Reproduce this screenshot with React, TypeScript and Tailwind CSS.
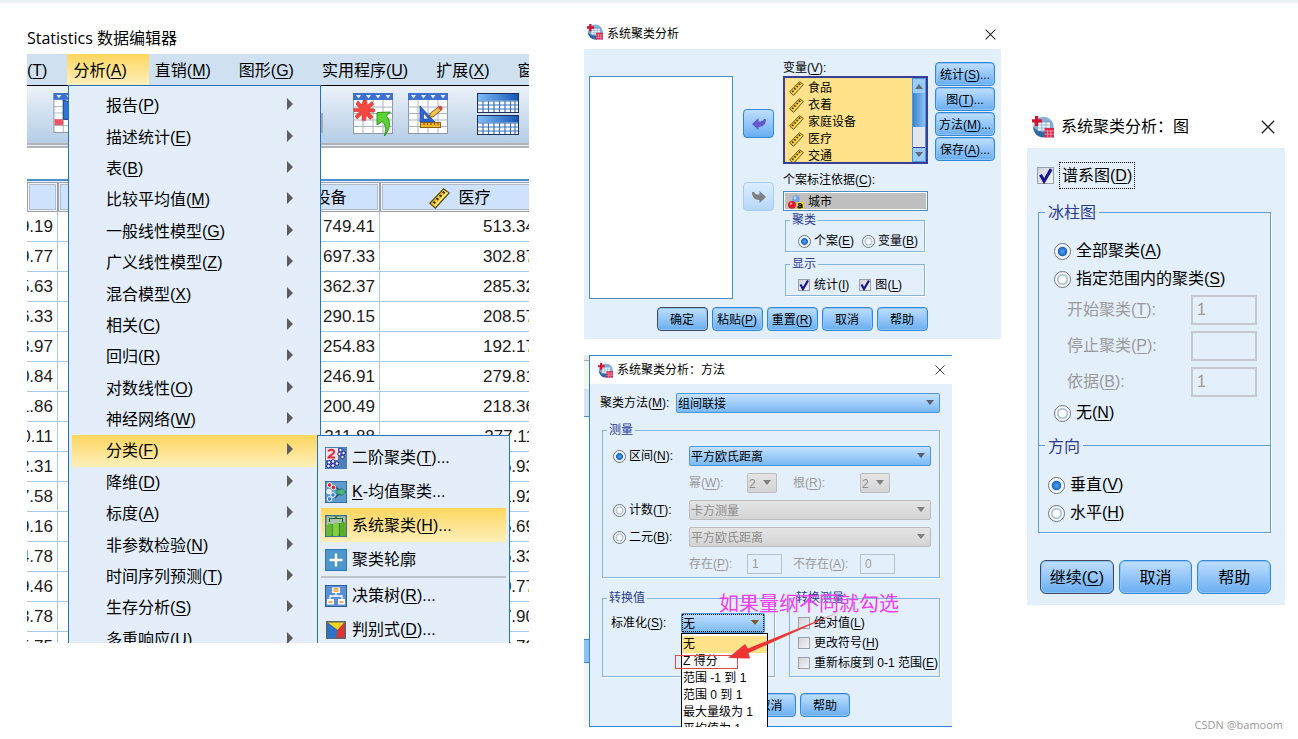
import React from "react";

type MnemonicProps = { text?: string; k: string; after?: string };

function Mnemonic({ text = "", k, after = "" }: MnemonicProps) {
  return (
    <span className="whitespace-nowrap">
      {text}(<span className="underline underline-offset-2">{k}</span>){after}
    </span>
  );
}

/* ---------- icons ---------- */

function RulerIcon({ className }: { className: string }) {
  return (
    <svg viewBox="0 0 20 20" className={className} aria-hidden="true">
      <path d="M.8 14.500 14 .8l5.200 4L6 19.200Z" fill="#efc52c" stroke="#5a4a18" strokeWidth="1.200" />
      <path d="M5.500 17 17.500 4" stroke="#fff0a0" strokeWidth="1.200" />
      <path d="m4 13 2 1.500M7 9.800l2 1.500M10 6.600l2 1.500M13 3.500l2 1.500" stroke="#3c3010" strokeWidth="1.800" />
    </svg>
  );
}

function AppIcon({ className }: { className: string }) {
  return (
    <svg viewBox="0 0 22 22" className={className} aria-hidden="true">
      <circle cx="11.500" cy="11" r="10.300" fill="#86aed6" />
      <path d="M1.200 11a10.300 10.300 0 0 0 12 10.200V16C8 16 4 14.500 1.200 11Z" fill="#2f66a3" />
      <rect x="5.500" y="6" width="13" height="9" fill="#f4f8fc" stroke="#5c89b8" strokeWidth=".7" />
      <path d="M5.500 9h13M5.500 12h13M9.800 6v9M14.100 6v9" stroke="#7fa9d2" strokeWidth=".8" />
      <rect x="12.500" y="12" width="9.500" height="9.500" fill="#cf2c4c" />
      <path d="M12.500 15h9.500M12.500 18.200h9.500M15.700 14v7.500M18.900 14v7.500" stroke="#f2b9c4" strokeWidth=".7" />
      <path d="M3 0h3.200v3.200h3.600v3.200H6.200V10H3V6.400H0V3.200h3Z" fill="#d3122f" />
    </svg>
  );
}

function NominalIcon() {
  return (
    <svg viewBox="0 0 16 14" className="h-3.5 w-4 shrink-0" aria-hidden="true">
      <circle cx="8" cy="4" r="3.8" fill="#6fa5e6" />
      <circle cx="7" cy="3" r="1.400" fill="#c7defa" />
      <circle cx="4" cy="9.800" r="3.900" fill="#d9202b" />
      <circle cx="3" cy="8.600" r="1.200" fill="#f79a9a" />
      <rect x="8.500" y="7" width="7.500" height="7" fill="#f5cf2e" />
      <path d="M10 9.300c2-1 4-.6 4 1v2.700m0-2.200c-2-.2-4 .1-4 1.200s3 1.200 4-.2" fill="none" stroke="#111" strokeWidth="1.300" />
    </svg>
  );
}

function CloseIcon({ className }: { className: string }) {
  return (
    <svg viewBox="0 0 12 12" className={className} aria-hidden="true">
      <path d="m.7.7 10.600 10.600M11.300.7.7 11.300" stroke="#222" strokeWidth="1.100" fill="none" />
    </svg>
  );
}

function SheetBase() {
  return (
    <>
      <rect x=".5" y=".5" width="39" height="40" fill="#fff" stroke="#8c98a8" />
      <path d="M.5 14h39M.5 20.500h39M.5 27h39M.5 33.500h39M10 7v33M20 7v33M30 7v33" stroke="#aab4c0" />
      <rect width="40" height="7" fill="#3e70cf" />
      <path d="M3 2h5L5.500 5.500ZM13 2h5l-2.500 3.500ZM22.500 2h5L25 5.500ZM32.500 2h5L35 5.500Z" fill="#e6f0ff" />
    </>
  );
}

function SheetMarkIcon() {
  return (
    <svg viewBox="0 0 40 41" className="h-10 w-10 shrink-0" aria-hidden="true">
      <SheetBase />
      <rect x="1" y="27" width="9" height="6" fill="#ee5468" />
      <path d="M10 7v20h18V14Z" fill="#2f74d6" stroke="#17407e" />
    </svg>
  );
}

function SheetUndoIcon() {
  return (
    <svg viewBox="0 0 40 43" className="h-[43px] w-10 shrink-0" aria-hidden="true">
      <SheetBase />
      <path d="m5 8 4 4 1.500-5 3 .3 1 5L19 8.500l1.500 3-4.500 4 5.500.5v3h-5.500l4 5-3 2.500-3.500-4.500-1 5.500-3.500-.2.200-6L4 26l-1.800-3L7 18.500H.8v-3l6 .2L3 11Z" fill="#f4483f" stroke="#c92a24" strokeWidth=".6" />
      <path d="M24 19.500 37.500 19l-4 4c4.500 5 4 13-2 20 2-8 1-12-2.500-14.500L24 32Z" fill="#5bd136" stroke="#288a14" strokeWidth=".9" />
    </svg>
  );
}

function SheetDesignIcon() {
  return (
    <svg viewBox="0 0 40 43" className="h-[43px] w-10 shrink-0" aria-hidden="true">
      <SheetBase />
      <path fillRule="evenodd" d="M12 13v16h15Zm3.500 7 5.500 6h-5.500Z" fill="#2c68d6" stroke="#1b4592" strokeWidth=".7" />
      <path d="m21 24 1.500-4L31 13.500l3 3L25 24Z" fill="#f2c14a" stroke="#5a4316" strokeWidth=".8" />
      <path d="m30 14.500 2.500-2 2.500 2.500-2.500 2.500Z" fill="#d64545" />
      <rect x="12.500" y="29.500" width="20" height="5" fill="#f1b429" stroke="#8a6212" />
      <path d="M16 30v2M19.500 30v2M23 30v2M26.500 30v2M30 30v2" stroke="#6d4b0a" />
    </svg>
  );
}

function SplitSheetIcon() {
  const half = (y: number) => (
    <g transform={`translate(0 ${y})`}>
      <rect x=".5" y=".5" width="41" height="19" fill="#fff" stroke="#1d3057" />
      <rect x="1" y="1" width="40" height="6.500" fill="url(#split-head)" />
      <path d="M1 8h40M1 12h40M1 16h40M6 8v11M11.500 8v11M17 8v11M22.500 8v11M28 8v11M33.500 8v11M38 8v11" stroke="#3a73b9" strokeWidth="1.200" />
    </g>
  );
  return (
    <svg viewBox="0 0 42 43" className="h-[43px] w-[42px] shrink-0" aria-hidden="true">
      <defs>
        <linearGradient id="split-head">
          <stop offset="0" stopColor="#7fbcf6" />
          <stop offset="1" stopColor="#1457b8" />
        </linearGradient>
      </defs>
      {half(0)}
      {half(22)}
    </svg>
  );
}

const iconBox = "h-[22px] w-[22px] shrink-0";

function TwoStepIcon() {
  return (
    <svg viewBox="0 0 22 22" className={iconBox} aria-hidden="true">
      <rect width="22" height="22" fill="#4c7fb8" />
      <rect x="1" y="1" width="12" height="12" fill="#f3dfe6" />
      <path d="M3.500 4.500C4 2 9 2 9 5S4 8 3.500 10.500H10" fill="none" stroke="#e02c3c" strokeWidth="2" />
      <g fill="#fff" stroke="#26269a" strokeWidth="1">
        <circle cx="15.500" cy="3" r="1.700" />
        <circle cx="18.500" cy="6" r="1.700" />
        <circle cx="14.500" cy="7" r="1.700" />
        <circle cx="17.500" cy="10" r="1.700" />
        <circle cx="4" cy="15.500" r="1.800" />
        <circle cx="8" cy="14.500" r="1.800" />
        <circle cx="3.500" cy="19" r="1.800" />
        <circle cx="8" cy="18.500" r="1.800" />
        <circle cx="12" cy="16.500" r="1.800" />
      </g>
    </svg>
  );
}

function KMeansIcon() {
  return (
    <svg viewBox="0 0 22 22" className={iconBox} aria-hidden="true">
      <rect width="22" height="22" fill="#5d9bcc" stroke="#2b5f96" strokeWidth="1.500" />
      <path d="M10 5l6 6-6 6" fill="none" stroke="#1f4f7f" strokeWidth="1.500" />
      <path d="M12 9h4V7l5 4-5 4v-2h-4Z" fill="#4cb878" stroke="#1c6a3c" strokeWidth=".6" />
      <g stroke="#fff" strokeWidth="1">
        <circle cx="4.500" cy="4" r="2.300" fill="#e4222e" />
        <circle cx="8.500" cy="6.500" r="2.300" fill="#e4222e" />
        <circle cx="4" cy="10.500" r="2.300" fill="#e9eef5" />
        <circle cx="8" cy="14" r="2.300" fill="#2e7fe0" />
        <circle cx="4.500" cy="18" r="2.300" fill="#2e7fe0" />
      </g>
    </svg>
  );
}

function HierarchyIcon() {
  return (
    <svg viewBox="0 0 22 22" className={iconBox} aria-hidden="true">
      <rect x=".7" y=".7" width="20.600" height="20.600" fill="#a9c4ae" stroke="#3f6f8f" strokeWidth="1.400" />
      <path d="M4.500 7V3.500h13V7M11 1v2.500" fill="none" stroke="#2e5a1e" strokeWidth="1.200" />
      <path d="M1.500 11 4.500 8l2 1.500v11.500h-5Z" fill="#63bb28" />
      <path d="m8 9.500 3.500-2.500 2 1.500V21H8Z" fill="#7fd336" />
      <path d="m15 8.500 3-2 2.500 1.500v13H15Z" fill="#57b022" />
      <path d="M7.200 9v12M14.300 8v13" stroke="#2e6a1e" strokeWidth="1" />
    </svg>
  );
}

function PlusIcon() {
  return (
    <svg viewBox="0 0 22 22" className={iconBox} aria-hidden="true">
      <rect x=".5" y=".5" width="21" height="21" fill="#4d97cf" stroke="#2f74b3" />
      <path d="M11 4.500v13M4.500 11h13" stroke="#fff" strokeWidth="2.400" />
    </svg>
  );
}

function TreeIcon() {
  return (
    <svg viewBox="0 0 22 22" className={iconBox} aria-hidden="true">
      <rect x=".5" y=".5" width="21" height="21" fill="#5b90d2" stroke="#2b5c9c" />
      <path d="M11 7v4M5 15v-4h12v4" fill="none" stroke="#fff" strokeWidth="1.300" />
      <rect x="7" y="2.500" width="8" height="5.500" fill="#fff" />
      <rect x="2" y="14" width="7" height="5.500" fill="#fff" />
      <rect x="13" y="14" width="7" height="5.500" fill="#fff" />
      <path d="M8.500 4h5M8.500 6h5M3.500 17h4M14.500 17h4" stroke="#ee9a1e" strokeWidth="1.400" />
    </svg>
  );
}

function DiscriminantIcon() {
  return (
    <svg viewBox="0 0 22 22" className={iconBox} aria-hidden="true">
      <rect x="1" y="2" width="20" height="18" fill="#5b6470" />
      <path d="M2.500 3.500h17L12.500 11Z" fill="#f7d21c" />
      <path d="M2.500 3.500 12.500 11l-1 8h-9Z" fill="#2c72c8" />
      <path d="M19.500 3.500v15h-8l1-7.500Z" fill="#e0342c" />
    </svg>
  );
}

/* ---------- shared controls ---------- */

type PushProps = { children: React.ReactNode; size?: "sm" | "lg"; primary?: boolean; className?: string };

function Push({ children, size = "sm", primary = false, className = "" }: PushProps) {
  const scale = size === "sm" ? "h-6 text-xs rounded pt-0.5" : "h-[34px] text-base rounded-md pt-0.5";
  const edge = primary ? "border-[#3b4a60]" : "border-[#3388d8]";
  return (
    <button
      type="button"
      className={`flex items-center justify-center whitespace-nowrap border bg-linear-to-b from-[#bfdfff] to-[#68adf0] text-black shadow-[inset_0_0_0_1px_#8fc4f7] ${scale} ${edge} ${className}`}
    >
      {children}
    </button>
  );
}

type ChoiceProps = {
  name?: string;
  checked?: boolean;
  size?: "sm" | "lg";
  children: React.ReactNode;
  className?: string;
};

function Radio({ name, checked = false, size = "sm", children, className = "" }: ChoiceProps) {
  const box = size === "sm" ? "size-[13px]" : "size-[17px]";
  const gap = size === "sm" ? "gap-[3px]" : "gap-[5px]";
  const dot = checked
    ? "bg-[radial-gradient(circle_closest-side,#56a6f4_0%,#1c66c0_56%,#d5e4f0_68%,#ffffff_84%)]"
    : "bg-[radial-gradient(circle_closest-side,#ffffff_0%,#ffffff_46%,#8fb0ca_62%,#ffffff_82%)]";
  return (
    <label className={`flex items-center ${gap} ${className}`}>
      <input
        type="radio"
        name={name}
        defaultChecked={checked}
        className={`shrink-0 appearance-none rounded-full border border-[#66727e] ${box} ${dot}`}
      />
      {children}
    </label>
  );
}

function Check({ checked = false, size = "sm", children, className = "" }: ChoiceProps) {
  const box = size === "sm" ? "size-3" : "size-[17px]";
  const gap = size === "sm" ? "gap-1" : "gap-[5px]";
  return (
    <label className={`flex items-center ${gap} ${className}`}>
      <span className={`relative shrink-0 ${box}`}>
        <input
          type="checkbox"
          defaultChecked={checked}
          className="block size-full appearance-none border border-[#98a0aa] bg-linear-to-br from-[#d2d2d8] to-[#f6f6f8]"
        />
        {checked && (
          <svg viewBox="0 0 12 12" className="pointer-events-none absolute inset-0 size-full" aria-hidden="true">
            <path d="m2.500 5.500 2.500 4.500L10 1.500" fill="none" stroke="#15158c" strokeWidth="2.200" />
          </svg>
        )}
      </span>
      {children}
    </label>
  );
}

type DropProps = {
  id: string;
  value: string;
  disabled?: boolean;
  focused?: boolean;
  className?: string;
};

function Drop({ id, value, disabled = false, focused = false, className = "" }: DropProps) {
  const skin = disabled
    ? "border-[#bcbcbc] bg-linear-to-b from-[#e4e4e4] to-[#d4d4d4] text-[#8e8e8e]"
    : "border-[#4a97dc] bg-linear-to-b from-[#c4e1ff] to-[#7ab9f4] text-black";
  return (
    <div className={`relative h-5 ${className}`}>
      <select
        id={id}
        disabled={disabled}
        defaultValue={value}
        className={`block h-5 w-full appearance-none rounded-xs border pl-px pt-0.5 text-xs disabled:opacity-100 ${skin} ${
          focused ? "outline-1 -outline-offset-2 outline-dotted outline-black" : ""
        }`}
      >
        <option>{value}</option>
      </select>
      <svg viewBox="0 0 8 5" className="pointer-events-none absolute right-1.5 top-[7px] h-[5px] w-2" aria-hidden="true">
        <path d="M0 0h8L4 5Z" fill={focused ? "#7a5a1e" : disabled ? "#808080" : "#56606c"} />
      </svg>
    </div>
  );
}

const groupBox = "min-w-0 border border-[#86b4da] shadow-[1px_1px_0_#ffffff]";

/* ---------- data editor ---------- */

const rows: [string, string, string][] = [
  ["9.19", "749.41", "513.34"],
  ["9.77", "697.33", "302.87"],
  ["5.63", "362.37", "285.32"],
  ["6.33", "290.15", "208.57"],
  ["3.97", "254.83", "192.17"],
  ["0.84", "246.91", "279.81"],
  ["1.86", "200.49", "218.36"],
  ["0.11", "211.88", "277.11"],
  ["2.31", "", "346.93"],
  ["7.58", "", "211.92"],
  ["9.16", "", "435.69"],
  ["4.78", "", "126.33"],
  ["9.46", "", "160.77"],
  ["3.78", "", "107.90"],
  ["5.75", "", "219.79"],
];

const analyzeItems: [string, string][] = [
  ["报告", "P"],
  ["描述统计", "E"],
  ["表", "B"],
  ["比较平均值", "M"],
  ["一般线性模型", "G"],
  ["广义线性模型", "Z"],
  ["混合模型", "X"],
  ["相关", "C"],
  ["回归", "R"],
  ["对数线性", "O"],
  ["神经网络", "W"],
  ["分类", "F"],
  ["降维", "D"],
  ["标度", "A"],
  ["非参数检验", "N"],
  ["时间序列预测", "T"],
  ["生存分析", "S"],
  ["多重响应", "U"],
];

const menuBar: [string, string][] = [
  ["分析", "A"],
  ["直销", "M"],
  ["图形", "G"],
  ["实用程序", "U"],
  ["扩展", "X"],
];

const gold = "bg-linear-to-b from-[#ffd65a] to-[#fcefb9]";

function AnalyzeMenu() {
  return (
    <ul
      role="menu"
      className="absolute left-[41px] top-[63px] grid h-[575px] w-[253px] grid-rows-[repeat(18,minmax(0,1fr))] border border-[#2673b8] bg-[#e3eefa] px-[3px] pb-1 pt-1 text-base"
    >
      {analyzeItems.map(([text, k]) => (
        <li key={text} role="none" className="flex">
          <button
            type="button"
            role="menuitem"
            className={`flex w-full items-center justify-between pl-[34px] pr-6 pt-px ${k === "F" ? gold : ""}`}
          >
            <Mnemonic text={text} k={k} />
            <svg viewBox="0 0 6 12" className="mb-1 h-3 w-1.5" aria-hidden="true">
              <path d="M0 0 6 6 0 12Z" fill="#5d5d5d" />
            </svg>
          </button>
        </li>
      ))}
    </ul>
  );
}

function ClassifyMenu() {
  const row = "flex h-[34px] w-full items-center gap-[5px] pl-1 pt-px whitespace-nowrap";
  return (
    <div
      role="menu"
      className="absolute left-[290px] top-[413px] w-[193px] border border-[#2673b8] bg-[#e3eefa] px-[3px] pt-1 text-base"
    >
      <button type="button" role="menuitem" className={row}>
        <TwoStepIcon />
        <Mnemonic text="二阶聚类" k="T" after="..." />
      </button>
      <button type="button" role="menuitem" className={row}>
        <KMeansIcon />
        <span>
          <span className="underline underline-offset-2">K</span>-均值聚类...
        </span>
      </button>
      <button type="button" role="menuitem" className={`${row} ${gold}`}>
        <HierarchyIcon />
        <Mnemonic text="系统聚类" k="H" after="..." />
      </button>
      <button type="button" role="menuitem" className={row}>
        <PlusIcon />
        聚类轮廓
      </button>
      <hr className="h-0.5 border-0 bg-[#bcc3ca]" />
      <button type="button" role="menuitem" className={row}>
        <TreeIcon />
        <Mnemonic text="决策树" k="R" after="..." />
      </button>
      <button type="button" role="menuitem" className={row}>
        <DiscriminantIcon />
        <Mnemonic text="判别式" k="D" after="..." />
      </button>
    </div>
  );
}

function DataEditor() {
  const head = "h-[30px] border border-[#9aa3b2] bg-[#cfe2fb] p-0 font-normal shadow-[inset_0_0_0_1px_#eef4fb,inset_0_0_0_2px_#b4bac6]";
  const cell = "h-[30px] border-b border-r border-[#a9cbe8] p-0 pr-1 text-right";
  return (
    <section className="relative h-[621px] overflow-hidden bg-white">
      <h2 className="flex h-8 items-center font-['Open_Sans','Noto_Sans_CJK_SC',sans-serif] text-base">
        Statistics 数据编辑器
      </h2>
      <nav className="flex h-8 overflow-hidden border-b border-black bg-[#cfe0f1] text-base">
        <button type="button" className="shrink-0 pr-5 pt-0.5">
          <Mnemonic k="T" />
        </button>
        {menuBar.map(([text, k]) => (
          <button key={text} type="button" className={`shrink-0 pl-1.5 pr-[22px] pt-0.5 ${k === "A" ? gold : ""}`}>
            <Mnemonic text={text} k={k} />
          </button>
        ))}
        <button type="button" className="shrink-0 pl-1.5 pt-0.5">
          窗
        </button>
      </nav>
      <div className="flex h-[57px] items-start bg-linear-to-b from-[#ebf2fa] to-[#b5cde6] pl-[26px] pt-[7px]">
        <SheetMarkIcon />
        <span className="ml-[200px] mt-5 h-5 w-[30px] shrink-0 bg-[#a5abb3]" />
        <span className="ml-[30px] flex gap-[15px]">
          <SheetUndoIcon />
          <SheetDesignIcon />
        </span>
        <span className="ml-[29px]">
          <SplitSheetIcon />
        </span>
      </div>
      <div className="h-[5px] border-y-2 border-[#b3b3b8] bg-[#e3eefa]" />
      <div className="h-[31px]" />
      <div className="h-[3px] border-t-2 border-[#4a8fd0] bg-[#e3eefa]" />
      <table className="w-[513px] table-fixed border-separate border-spacing-0 text-[17px]">
        <colgroup>
          <col className="w-[31px]" />
          <col className="w-[162px]" />
          <col className="w-[160px]" />
          <col className="w-[160px]" />
        </colgroup>
        <thead className="text-base">
          <tr>
            <th className={head} />
            <th className={head} />
            {["家庭设备", "医疗"].map((t) => (
              <th key={t} className={head}>
                <span className="flex items-center justify-center gap-2 pt-0.5">
                  <RulerIcon className="h-[21px] w-[21px]" />
                  {t}
                </span>
              </th>
            ))}
          </tr>
        </thead>
        <tbody className="text-[#1c1c1c]">
          {rows.map(([left, middle, right]) => (
            <tr key={right}>
              <td className={cell}>
                <span className="flex justify-end overflow-hidden">{left}</span>
              </td>
              <td className={cell} />
              <td className={cell}>{middle}</td>
              <td className={cell}>{right}</td>
            </tr>
          ))}
        </tbody>
      </table>
      <AnalyzeMenu />
      <ClassifyMenu />
    </section>
  );
}

/* ---------- cluster dialog ---------- */

function ClusterDialog() {
  return (
    <section>
      <header className="flex h-[34px] items-center gap-1 bg-white pl-[3px] pr-1">
        <AppIcon className="size-4" />
        <h2 className="grow pt-1 text-xs">系统聚类分析</h2>
        <button type="button" aria-label="关闭" className="pr-px pt-1">
          <CloseIcon className="size-[11px]" />
        </button>
      </header>
      <div className="bg-[#e3effa] pb-2 pl-[5px] pr-1.5 pt-[11px] text-xs">
        <div className="flex">
          <div className="mt-4 flex-1 border border-[#4a8fc4] bg-white" />
          <div className="ml-2.5 flex w-[31px] flex-col gap-11 pt-[49px]">
            <button
              type="button"
              aria-label="移出变量"
              className="flex h-[29px] items-center justify-center rounded border border-[#3388d8] bg-linear-to-b from-[#bfdfff] to-[#68adf0]"
            >
              <svg viewBox="0 0 14 12" className="h-3 w-3.5" aria-hidden="true">
                <path d="M0 6 6.500 0v3.500c3 0 4 0 5.500-2.500h2c0 5-2.500 8-7.500 8v3Z" fill="#6558c8" />
              </svg>
            </button>
            <button
              type="button"
              aria-label="移入标注"
              className="flex h-[29px] items-center justify-center rounded border border-[#a5cdf2] bg-linear-to-b from-[#dcedff] to-[#b5d7f8]"
            >
              <svg viewBox="0 0 14 12" className="h-3 w-3.5" aria-hidden="true">
                <path d="M14 6 7.500 0v3.500c-3 0-4 0-5.500-2.500H0c0 5 2.500 8 7.500 8v3Z" fill="#7c7f84" />
              </svg>
            </button>
          </div>
          <div className="ml-[9px] w-[145px] pb-[3px]">
            <div className="leading-4">
              <Mnemonic text="变量" k="V" after=":" />
            </div>
            <div className="flex h-[88px] border-2 border-[#3c3c9c] bg-white">
              <ul className="flex-1 overflow-hidden bg-[#ffe28a] pl-1 pt-0.5">
                {["食品", "衣着", "家庭设备", "医疗", "交通"].map((t) => (
                  <li key={t} className="flex h-[17px] items-center gap-1 leading-[17px]">
                    <RulerIcon className="size-[15px]" />
                    {t}
                  </li>
                ))}
              </ul>
              <div className="flex w-3.5 flex-col border border-[#4a97dc] bg-[#e4e4ec]">
                <span className="flex h-3.5 items-center justify-center bg-[#9ccbf6]">
                  <svg viewBox="0 0 8 5" className="h-[5px] w-2" aria-hidden="true">
                    <path d="M0 5h8L4 0Z" fill="#5e6a76" />
                  </svg>
                </span>
                <span className="h-[34px] bg-linear-to-r from-[#3a84c8] to-[#8cc2f2]" />
                <span className="flex-1" />
                <span className="flex h-3.5 items-center justify-center border-t border-[#3c3c9c] bg-[#9ccbf6]">
                  <svg viewBox="0 0 8 5" className="h-[5px] w-2" aria-hidden="true">
                    <path d="M0 0h8L4 5Z" fill="#5e6a76" />
                  </svg>
                </span>
              </div>
            </div>
            <div className="mt-2 leading-4">
              <Mnemonic text="个案标注依据" k="C" after=":" />
            </div>
            <div className="mt-[3px] flex h-5 items-center gap-1 border border-[#4a8fc4] bg-[#bfbfbf] pl-1 pt-0.5 shadow-[inset_0_0_0_1px_#ffffff]">
              <NominalIcon />
              城市
            </div>
            <fieldset className={`${groupBox} ml-0.5 mr-[3px] mt-0.5`}>
              <legend className="ml-1 px-0.5 leading-3.5 text-[#2c3c92]">聚类</legend>
              <div className="flex h-6 items-center justify-between pl-3 pr-1.5 pt-1">
                <Radio name="cluster" checked>
                  <Mnemonic text="个案" k="E" />
                </Radio>
                <Radio name="cluster">
                  <Mnemonic text="变量" k="B" />
                </Radio>
              </div>
            </fieldset>
            <fieldset className={`${groupBox} ml-0.5 mr-[3px] mt-[5px]`}>
              <legend className="ml-1 px-0.5 leading-3.5 text-[#2c3c92]">显示</legend>
              <div className="flex h-6 items-center gap-2.5 pl-3 pt-1">
                <Check checked>
                  <Mnemonic text="统计" k="I" />
                </Check>
                <Check checked>
                  <Mnemonic text="图" k="L" />
                </Check>
              </div>
            </fieldset>
          </div>
          <div className="ml-[7px] flex w-[60px] flex-col gap-px pt-0.5">
            <Push>
              <Mnemonic text="统计" k="S" after="..." />
            </Push>
            <Push>
              <Mnemonic text="图" k="T" after="..." />
            </Push>
            <Push>
              <Mnemonic text="方法" k="M" after="..." />
            </Push>
            <Push>
              <Mnemonic text="保存" k="A" after="..." />
            </Push>
          </div>
        </div>
        <div className="mt-2 flex justify-center gap-1">
          <Push primary className="w-[51px]">
            确定
          </Push>
          <Push className="w-[51px]">
            <Mnemonic text="粘贴" k="P" />
          </Push>
          <Push className="w-[51px]">
            <Mnemonic text="重置" k="R" />
          </Push>
          <Push className="w-[51px]">取消</Push>
          <Push className="w-[51px]">帮助</Push>
        </div>
      </div>
    </section>
  );
}

/* ---------- method dialog ---------- */

function MethodDialog() {
  const legend = "ml-1 px-0.5 leading-3.5 text-[#2c3c92]";
  const quad = "grid flex-1 grid-cols-[58px_46px_67px_auto] items-center text-[#9a9a9a]";
  const field = "h-5 w-[35px] border border-[#b9c2ca] bg-[#e3effa] px-1 text-xs text-[#9a9a9a]";
  return (
    <section className="relative mr-[49px] mt-4 flex overflow-hidden text-xs">
      <div className="flex w-[5px] flex-col overflow-hidden bg-[#f4f4f4]" aria-hidden="true">
        <span className="h-1.5 border-b border-[#b0b0b0] bg-[#e8e8e8]" />
        <span className="h-7" />
        <span className="h-7 border-b border-[#4a8fd0] bg-[#d6e3f2]" />
        <span className="h-[222px] bg-white" />
        <span className="h-6 border-y border-[#3388d8] bg-[#8cc2f5]" />
        <span className="flex-1" />
      </div>
      <div className="min-w-0 flex-1 border-y border-l border-[#2f86d0]">
        <header className="flex h-7 items-center gap-1 bg-white pl-2 pr-[7px]">
          <AppIcon className="size-[15px]" />
          <h2 className="grow">系统聚类分析：方法</h2>
          <button type="button" aria-label="关闭">
            <CloseIcon className="size-2.5" />
          </button>
        </header>
        <div className="bg-[#e3effa] pb-[9px] pl-2.5 pr-3 pt-[9px]">
          <div className="flex items-center">
            <label htmlFor="method" className="w-[76px]">
              <Mnemonic text="聚类方法" k="M" after=":" />
            </label>
            <Drop id="method" value="组间联接" className="flex-1" />
          </div>
          <fieldset className={`${groupBox} ml-0.5 mt-2.5 pb-[3px]`}>
            <legend className={legend}>测量</legend>
            <div className="flex flex-col gap-[7px] pl-2.5 pr-2 pt-[9px]">
              <div className="flex h-5 items-center">
                <Radio name="measure" checked className="w-[76px]">
                  <Mnemonic text="区间" k="N" after=":" />
                </Radio>
                <Drop id="interval" value="平方欧氏距离" className="flex-1" />
              </div>
              <div className="flex h-5 pl-[76px]">
                <div className={quad}>
                  <label htmlFor="power">
                    <Mnemonic text="幂" k="W" after=":" />
                  </label>
                  <Drop id="power" value="2" disabled className="w-[30px]" />
                  <label htmlFor="root">
                    <Mnemonic text="根" k="R" after=":" />
                  </label>
                  <Drop id="root" value="2" disabled className="w-[30px]" />
                </div>
              </div>
              <div className="flex h-5 items-center">
                <Radio name="measure" className="w-[76px]">
                  <Mnemonic text="计数" k="T" after=":" />
                </Radio>
                <Drop id="counts" value="卡方测量" disabled className="flex-1" />
              </div>
              <div className="flex h-5 items-center">
                <Radio name="measure" className="w-[76px]">
                  <Mnemonic text="二元" k="B" after=":" />
                </Radio>
                <Drop id="binary" value="平方欧氏距离" disabled className="flex-1" />
              </div>
              <div className="flex h-5 pl-[76px]">
                <div className={quad}>
                  <label htmlFor="present">
                    <Mnemonic text="存在" k="P" after=":" />
                  </label>
                  <input id="present" disabled defaultValue="1" className={field} />
                  <label htmlFor="absent">
                    <Mnemonic text="不存在" k="A" after=":" />
                  </label>
                  <input id="absent" disabled defaultValue="0" className={field} />
                </div>
              </div>
            </div>
          </fieldset>
          <div className="ml-0.5 mt-[13px] flex gap-3.5">
            <fieldset className={`${groupBox} flex-1`}>
              <legend className={legend}>转换值</legend>
              <div className="flex items-center pl-2 pr-[9px] pt-2">
                <label htmlFor="standardize" className="w-[70px] shrink-0">
                  <Mnemonic text="标准化" k="S" after=":" />
                </label>
                <div className="relative flex-1">
                  <Drop id="standardize" value="无" focused />
                  <ul
                    role="listbox"
                    className="absolute left-0 top-5 z-10 w-[87px] border border-black bg-white pt-0.5 leading-[17px]"
                  >
                    {["无", "Z 得分", "范围 -1 到 1", "范围 0 到 1", "最大量级为 1", "平均值为 1"].map((t, i) => (
                      <li
                        key={t}
                        role="option"
                        aria-selected={i === 0}
                        className={`h-[17px] whitespace-nowrap pl-px ${i === 0 ? "bg-[#ffe28a]" : ""}`}
                      >
                        {t}
                      </li>
                    ))}
                  </ul>
                </div>
              </div>
            </fieldset>
            <fieldset className={`${groupBox} w-[151px] pb-[3px]`}>
              <legend className={legend}>转换测量</legend>
              <div className="flex flex-col pl-2 pt-2">
                <Check className="h-5">
                  <Mnemonic text="绝对值" k="L" />
                </Check>
                <Check className="h-5">
                  <Mnemonic text="更改符号" k="H" />
                </Check>
                <Check className="h-5">
                  <Mnemonic text="重新标度到 0-1 范围" k="E" />
                </Check>
              </div>
            </fieldset>
          </div>
          <div className="mt-4 flex justify-center gap-1">
            <Push primary className="w-[51px]">
              <Mnemonic text="继续" k="C" />
            </Push>
            <Push className="w-[51px]">取消</Push>
            <Push className="w-[50px]">帮助</Push>
          </div>
        </div>
      </div>
      <p className="absolute left-[135px] top-[237px] z-20 whitespace-nowrap text-xl leading-6 text-[#ee3cf0]">
        如果量纲不同就勾选
      </p>
      <svg className="pointer-events-none absolute inset-0 z-20 size-full" aria-hidden="true">
        <rect x="91.500" y="300.500" width="62" height="13" fill="none" stroke="#e04848" />
        <path d="M255 257 164 293.500l-3-4.500-17 14 22 .5-1.500-5.500Z" fill="#ee3434" />
      </svg>
    </section>
  );
}

/* ---------- plots dialog ---------- */

function PlotsDialog() {
  const field = "h-[30px] w-[66px] border-2 border-[#c6cace] bg-[#e3effa] px-1 text-base text-[#9a9a9a]";
  const steps: [string, string, string, string][] = [
    ["start", "开始聚类", "T", "1"],
    ["stop", "停止聚类", "P", ""],
    ["by", "依据", "B", "1"],
  ];
  return (
    <section className="text-base">
      <header className="flex h-[42px] items-center gap-[7px] bg-white pl-[5px] pr-2.5">
        <AppIcon className="size-[22px]" />
        <h2 className="grow">系统聚类分析：图</h2>
        <button type="button" aria-label="关闭">
          <CloseIcon className="size-3.5" />
        </button>
      </header>
      <div className="bg-[#e3effa] pb-[11px] pl-2.5 pr-3.5 pt-3.5">
        <Check checked size="lg">
          <span className="border border-dotted border-black px-0.5 leading-[25px]">
            <Mnemonic text="谱系图" k="D" />
          </span>
        </Check>
        <fieldset className="ml-px mt-3 min-w-0 border border-b-0 border-[#5f9fd4] pb-[18px] shadow-[1px_0_0_#ffffff]">
          <legend className="ml-1.5 px-[3px] pt-0.5 leading-5 text-[#2c3c92]">冰柱图</legend>
          <div className="pl-[15px] pr-[13px] pt-3.5">
            <Radio name="icicle" size="lg" checked className="h-7">
              <Mnemonic text="全部聚类" k="A" />
            </Radio>
            <Radio name="icicle" size="lg" className="h-7">
              <Mnemonic text="指定范围内的聚类" k="S" />
            </Radio>
            <div className="my-0.5 flex flex-col gap-1.5 pl-[13px] text-[#9a9a9a]">
              {steps.map(([id, text, k, value]) => (
                <div key={id} className="flex items-center justify-between">
                  <label htmlFor={id}>
                    <Mnemonic text={text} k={k} after=":" />
                  </label>
                  <input id={id} disabled defaultValue={value} className={field} />
                </div>
              ))}
            </div>
            <Radio name="icicle" size="lg" className="h-7">
              <Mnemonic text="无" k="N" />
            </Radio>
          </div>
        </fieldset>
        <fieldset className="-mt-3 ml-px min-w-0 border border-[#5f9fd4] pb-[5px] shadow-[1px_1px_0_#ffffff]">
          <legend className="ml-1.5 px-[3px] pt-1 leading-5 text-[#2c3c92]">方向</legend>
          <div className="pl-[9px] pt-3.5">
            <Radio name="direction" size="lg" checked className="h-7">
              <Mnemonic text="垂直" k="V" />
            </Radio>
            <Radio name="direction" size="lg" className="h-7">
              <Mnemonic text="水平" k="H" />
            </Radio>
          </div>
        </fieldset>
        <div className="mt-[27px] flex gap-[5px] pl-[3px]">
          <Push size="lg" primary className="flex-1">
            <Mnemonic text="继续" k="C" />
          </Push>
          <Push size="lg" className="flex-1">
            取消
          </Push>
          <Push size="lg" className="flex-1">
            帮助
          </Push>
        </div>
      </div>
    </section>
  );
}

export default function App() {
  return (
    <main className="flex min-h-screen flex-col overflow-x-hidden border-t-3 border-[#eaf3f2] bg-white font-['Liberation_Sans','Noto_Sans_CJK_SC',sans-serif] text-black">
      <div className="grid flex-1 grid-cols-[minmax(0,531fr)_minmax(0,417fr)_minmax(0,258fr)] gap-x-[26px] pl-[27px] pr-[13px] pt-3">
        <div className="pr-[29px] pt-[7px]">
          <DataEditor />
        </div>
        <div>
          <ClusterDialog />
          <MethodDialog />
        </div>
        <div className="flex flex-col justify-between pt-[91px]">
          <PlotsDialog />
          <footer className="pb-1.5 pr-0.5 text-right font-['Open_Sans',sans-serif] text-[11px] text-[#999999]">CSDN @bamoom</footer>
        </div>
      </div>
    </main>
  );
}
